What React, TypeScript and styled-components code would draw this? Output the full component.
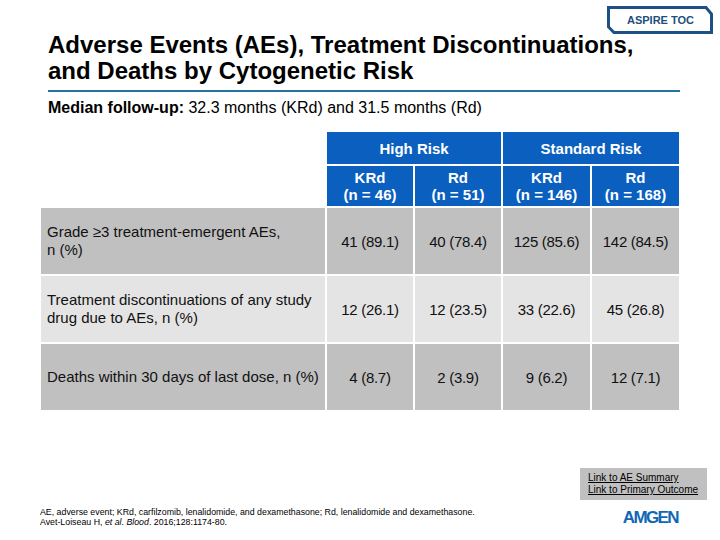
import React from "react";
import styled, { createGlobalStyle } from "styled-components";

const Global = createGlobalStyle`
  html, body { margin: 0; padding: 0; background: #ffffff; }
  body { font-family: "Liberation Sans", Arial, sans-serif; }
`;

const Page = styled.div`
  position: relative;
  width: 720px;
  height: 540px;
  overflow: hidden;
  display: flex;
  flex-direction: column;
  background: #fff;
  color: #000;
  font-family: "Liberation Sans", Arial, sans-serif;
`;

const TocButton = styled.a`
  position: absolute;
  top: 6px;
  left: 607px;
  width: 106px;
  height: 28px;
  display: flex;
  align-items: center;
  justify-content: center;
  font-size: 11px;
  font-weight: 700;
  color: #1d4f7f;
  text-decoration: none;
  cursor: pointer;
`;

const TocFrame = styled.svg`
  position: absolute;
  inset: 0;
`;

const TocLabel = styled.span`
  position: relative;
  padding-left: 1px;
`;

const Title = styled.h1`
  margin: 32px 0 0 48px;
  font-size: 24px;
  line-height: 26px;
  font-weight: 700;
  color: #000;
`;

const Rule = styled.div`
  margin: 6px 0 0 48px;
  width: 632px;
  height: 2px;
  background: #2274a3;
`;

const Subtitle = styled.p`
  margin: 7px 0 0 48px;
  font-size: 16px;
  line-height: 18px;
  color: #000;
`;

const Table = styled.div`
  margin: 15px 0 0 41px;
  display: grid;
  grid-template-columns: 284px 86px 86px 87px 87px;
  grid-template-rows: 32px 40px 66px 66px 66px;
  gap: 2px;
  width: 638px;
`;

const Blank = styled.div``;

const Head = styled.div<{ $span?: number }>`
  grid-column: span ${(p) => p.$span ?? 1};
  background: #0a5fbf;
  color: #fff;
  font-weight: 700;
  font-size: 15px;
  line-height: 17px;
  display: flex;
  flex-direction: column;
  align-items: center;
  justify-content: center;
  text-align: center;
  white-space: nowrap;
`;

const Label = styled.div<{ $light?: boolean }>`
  background: ${(p) => (p.$light ? "#e4e4e4" : "#c0c0c0")};
  font-size: 15px;
  line-height: 18px;
  color: #111;
  padding: 0 6px;
  display: flex;
  align-items: center;
`;

const Cell = styled.div<{ $light?: boolean }>`
  background: ${(p) => (p.$light ? "#e4e4e4" : "#c0c0c0")};
  font-size: 15px;
  letter-spacing: -0.3px;
  color: #111;
  display: flex;
  align-items: center;
  justify-content: center;
  white-space: nowrap;
`;

const Footer = styled.div`
  margin-top: auto;
  padding: 0 13px 13px 40px;
  display: flex;
  justify-content: space-between;
  align-items: flex-end;
`;

const Notes = styled.div`
  font-size: 8.8px;
  line-height: 10px;
  color: #000;
`;

const Side = styled.div`
  display: flex;
  flex-direction: column;
`;

const LinkBox = styled.div`
  width: 127px;
  height: 32px;
  box-sizing: border-box;
  padding: 4px 0 0 8px;
  background: #c0c0c0;
  display: flex;
  flex-direction: column;
`;

const LinkText = styled.a`
  font-size: 10px;
  line-height: 12px;
  color: #000;
  text-decoration: underline;
  cursor: pointer;
  white-space: nowrap;
`;

const Logo = styled.div`
  align-self: flex-end;
  margin: 9px 29px 0 0;
  font-size: 17px;
  line-height: 18px;
  font-weight: 900;
  letter-spacing: -1.6px;
  color: #1167b5;
`;

const rows = [
  {
    label: (
      <>
        Grade ≥3 treatment-emergent AEs,
        <br />n (%)
      </>
    ),
    values: ["41 (89.1)", "40 (78.4)", "125 (85.6)", "142 (84.5)"],
    light: false,
  },
  {
    label: (
      <>
        Treatment discontinuations of any study
        <br />
        drug due to AEs, n (%)
      </>
    ),
    values: ["12 (26.1)", "12 (23.5)", "33 (22.6)", "45 (26.8)"],
    light: true,
  },
  {
    label: <>Deaths within 30 days of last dose, n (%)</>,
    values: ["4 (8.7)", "2 (3.9)", "9 (6.2)", "12 (7.1)"],
    light: false,
  },
];

const arms = [
  ["KRd", "(n = 46)"],
  ["Rd", "(n = 51)"],
  ["KRd", "(n = 146)"],
  ["Rd", "(n = 168)"],
];

export default function App() {
  return (
    <Page>
      <Global />
      <TocButton>
        <TocFrame width="106" height="28" viewBox="0 0 106 28">
          <polygon
            points="1.5,1.5 99,1.5 104.5,8 104.5,26.5 7,26.5 1.5,21"
            fill="#fff"
            stroke="#1d5186"
            strokeWidth="3"
          />
        </TocFrame>
        <TocLabel>ASPIRE TOC</TocLabel>
      </TocButton>

      <Title>
        Adverse Events (AEs), Treatment Discontinuations,
        <br />
        and Deaths by Cytogenetic Risk
      </Title>
      <Rule />
      <Subtitle>
        <b>Median follow-up:</b> 32.3 months (KRd) and 31.5 months (Rd)
      </Subtitle>

      <Table>
        <Blank />
        <Head $span={2}>High Risk</Head>
        <Head $span={2}>Standard Risk</Head>
        <Blank />
        {arms.map(([a, n], i) => (
          <Head key={i}>
            <span>{a}</span>
            <span>{n}</span>
          </Head>
        ))}
        {rows.map((r, i) => (
          <React.Fragment key={i}>
            <Label $light={r.light}>
              <span>{r.label}</span>
            </Label>
            {r.values.map((v, j) => (
              <Cell key={j} $light={r.light}>
                {v}
              </Cell>
            ))}
          </React.Fragment>
        ))}
      </Table>

      <Footer>
        <Notes>
          AE, adverse event; KRd, carfilzomib, lenalidomide, and dexamethasone; Rd, lenalidomide and dexamethasone.
          <br />
          Avet-Loiseau H, <i>et al</i>. <i>Blood</i>. 2016;128:1174-80.
        </Notes>
        <Side>
          <LinkBox>
            <LinkText>Link to AE Summary</LinkText>
            <LinkText>Link to Primary Outcome</LinkText>
          </LinkBox>
          <Logo>AMGEN</Logo>
        </Side>
      </Footer>
    </Page>
  );
}
